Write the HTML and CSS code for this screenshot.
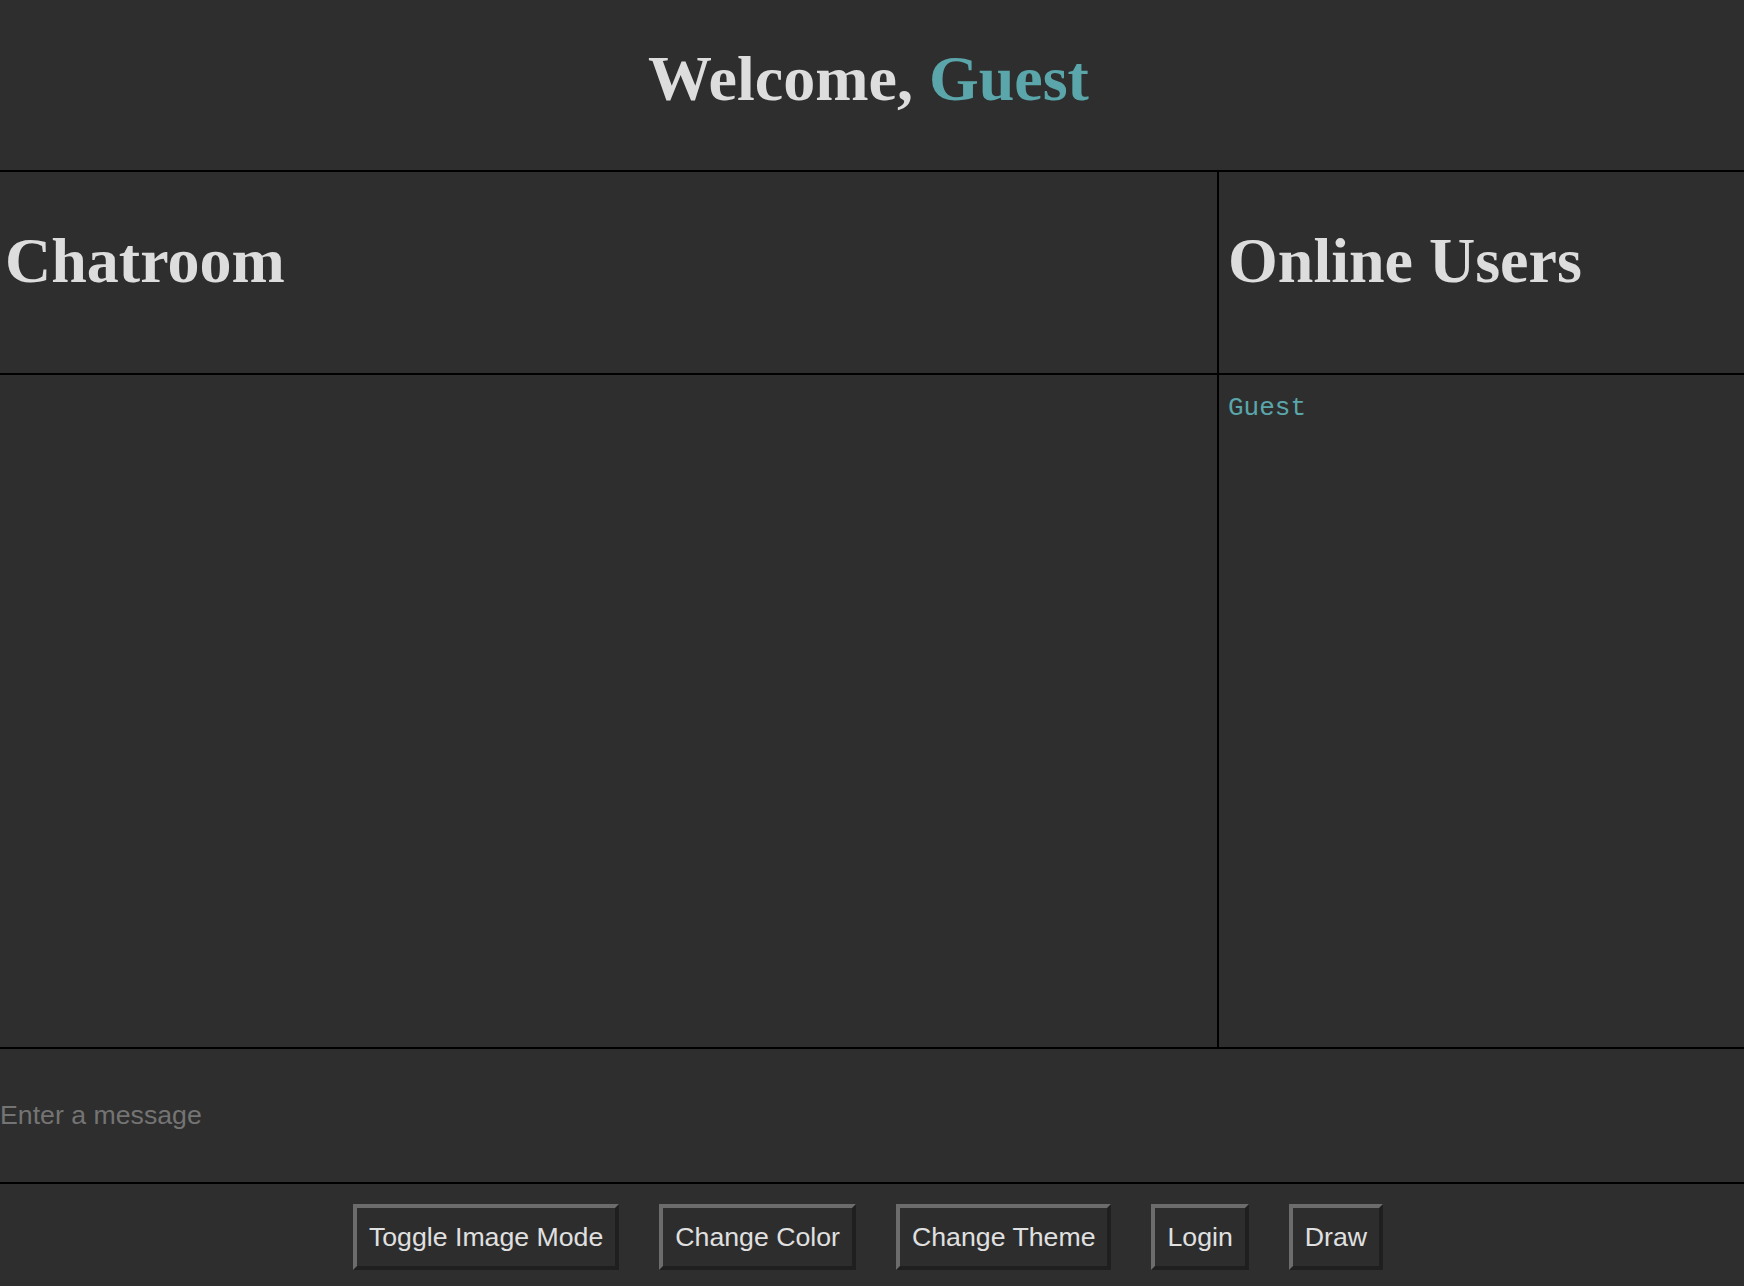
FILE: index.html
```html
<!DOCTYPE html>
<html lang="en">
<head>
<meta charset="utf-8">
<title>Chatroom</title>
<link rel="stylesheet" href="styles.css">
</head>
<body>
<header class="welcome">
  <h1 class="welcome-title">Welcome, <span class="accent">Guest</span></h1>
</header>
<main class="chat-grid">
  <div class="pane-head chat-head"><h2 class="pane-title">Chatroom</h2></div>
  <div class="pane-head users-head"><h2 class="pane-title">Online Users</h2></div>
  <div class="messages"></div>
  <ul class="user-list"><li class="user-item">Guest</li></ul>
</main>
<div class="composer">
  <input class="message-input" type="text" placeholder="Enter a message">
</div>
<nav class="toolbar">
  <button class="tool-btn">Toggle Image Mode</button>
  <button class="tool-btn">Change Color</button>
  <button class="tool-btn">Change Theme</button>
  <button class="tool-btn">Login</button>
  <button class="tool-btn">Draw</button>
</nav>
</body>
</html>
```

FILE: styles.css
```css
html, body {
  margin: 0;
  padding: 0;
  background: #2e2e2e;
  color: #dddddd;
  font-family: "Liberation Serif", "Times New Roman", serif;
}

.accent {
  color: #5aa6aa;
}

.welcome {
  box-sizing: border-box;
  height: 172px;
  padding: 42px 7px 0 0;
  border-bottom: 2px solid #000;
  text-align: center;
}

.welcome-title {
  margin: 0;
  font-size: 64px;
  font-weight: bold;
}

.chat-grid {
  display: grid;
  grid-template-columns: 1217px 1fr;
  grid-template-rows: 203px 672px;
  border-bottom: 2px solid #000;
}

.pane-head {
  box-sizing: border-box;
  border-bottom: 2px solid #000;
  padding-top: 52px;
}

.chat-head {
  padding-left: 5px;
}

.users-head {
  border-left: 2px solid #000;
  padding-left: 9px;
}

.pane-title {
  margin: 0;
  font-size: 64px;
  font-weight: bold;
  color: #dddddd;
}

.messages {
  min-height: 0;
}

.user-list {
  list-style: none;
  margin: 0;
  padding: 18px 0 0 9px;
  border-left: 2px solid #000;
}

.user-item {
  font-family: "Liberation Mono", "Courier New", monospace;
  font-size: 26px;
  color: #5aa6aa;
}

.composer {
  box-sizing: border-box;
  height: 135px;
  border-bottom: 2px solid #000;
  display: flex;
}

.message-input {
  flex: 1;
  margin: 0;
  padding: 0;
  border: 0;
  outline: none;
  background: transparent;
  color: #dddddd;
  font-family: "Liberation Sans", Arial, sans-serif;
  font-size: 26.7px;
}

.message-input::placeholder {
  color: #747474;
}

.toolbar {
  display: flex;
  justify-content: center;
  gap: 40px;
  padding: 20px 8px 16px 0;
}

.tool-btn {
  margin: 0;
  padding: 14px 12px;
  background: #2d2d2d;
  color: #e0e0e0;
  font-family: "Liberation Sans", Arial, sans-serif;
  font-size: 26.7px;
  line-height: 30px;
  border: 4px solid;
  border-color: #6c6c6c #1f1f1f #1f1f1f #6c6c6c;
  border-radius: 0;
}
```
